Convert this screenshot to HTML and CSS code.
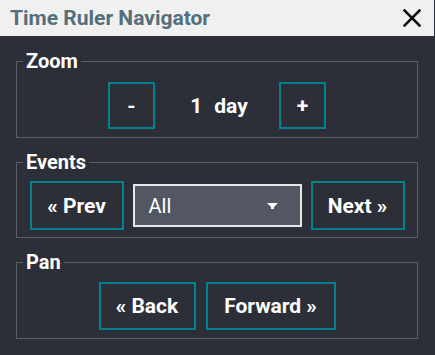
FILE: index.html
```html
<!DOCTYPE html>
<html>
<head>
<meta charset="utf-8">
<link rel="stylesheet" href="styles.css">
</head>
<body>
<div class="window">
  <div class="titlebar">
    <span class="title">Time Ruler Navigator</span>
    <span class="close">
      <svg width="18" height="18" viewBox="0 0 18 18"><path d="M1.5 1.5 L16.5 16.5 M16.5 1.5 L1.5 16.5" stroke="#111" stroke-width="2.6" stroke-linecap="square"/></svg>
    </span>
  </div>
  <div class="content">
    <fieldset class="group g-zoom">
      <legend>Zoom</legend>
      <div class="row">
        <button class="btn sq">-</button>
        <div class="zoomval"><span>1</span><span>day</span></div>
        <button class="btn sq">+</button>
      </div>
    </fieldset>
    <fieldset class="group g-events">
      <legend>Events</legend>
      <div class="row">
        <button class="btn ev">« Prev</button>
        <div class="select"><span>All</span>
          <svg width="11" height="6" viewBox="0 0 11 6"><path d="M0 0 H11 L7 4 V6 H4 V4 Z" fill="#fff"/></svg>
        </div>
        <button class="btn ev">Next »</button>
      </div>
    </fieldset>
    <fieldset class="group g-pan">
      <legend>Pan</legend>
      <div class="row">
        <button class="btn pn back">« Back</button>
        <button class="btn pn fwd">Forward »</button>
      </div>
    </fieldset>
  </div>
</div>
</body>
</html>
```
FILE: styles.css
```css
html, body {
  margin: 0;
  padding: 0;
  background: #2d2f38;
}
body {
  font-family: Roboto, "Liberation Sans", sans-serif;
  width: 435px;
  height: 355px;
  overflow: hidden;
}
.window {
  height: 355px;
  background: #2d2f38;
}
.titlebar {
  height: 36px;
  margin-right: 1px;
  background: #f0f0f0;
  display: flex;
  align-items: center;
  justify-content: space-between;
  padding: 0 13px 0 10px;
}
.title {
  font-weight: 700;
  font-size: 21px;
  color: #546e7a;
}
.close {
  display: flex;
  width: 18px;
  height: 18px;
}
.content {
  padding: 15px 17px 0 16px;
  display: flex;
  flex-direction: column;
  gap: 14px;
}
.group {
  margin: 0;
  border: 1px solid #5b5d68;
  padding: 10px 0 7px 0;
  min-width: 0;
}
.group legend {
  margin-left: 6px;
  padding: 0 3px;
  font-weight: 700;
  font-size: 20px;
  line-height: 20px;
  color: #ffffff;
}
.g-zoom { padding-top: 11px; padding-bottom: 8px; }
.g-events { padding-top: 9px; padding-bottom: 7px; }
.g-pan { padding-top: 10px; padding-bottom: 8px; }
.row {
  display: flex;
  justify-content: center;
  align-items: center;
  gap: 10px;
}
.g-zoom .row { gap: 0; }
.g-events .row { gap: 9px; }
.btn {
  box-sizing: border-box;
  background: transparent;
  border: 2px solid #00838f;
  color: #ffffff;
  font-family: Roboto, "Liberation Sans", sans-serif;
  font-weight: 700;
  font-size: 21px;
  padding: 0;
  margin: 0;
  height: 49px;
}
.btn.sq {
  width: 47px;
  height: 47px;
}
.btn.ev { width: 94px; }
.btn.pn { height: 48px; }
.btn.back { width: 97px; }
.btn.fwd { width: 130px; }
.zoomval {
  width: 124px;
  display: flex;
  justify-content: center;
  gap: 12px;
  color: #ffffff;
  font-weight: 700;
  font-size: 21px;
  padding-left: 4px;
  box-sizing: border-box;
}
.select {
  box-sizing: border-box;
  width: 169px;
  height: 43px;
  background: #535763;
  border: 2px solid #e6e6e6;
  display: flex;
  align-items: center;
  justify-content: space-between;
  padding: 0 22px 0 14px;
  color: #ffffff;
  font-size: 20px;
}
```
